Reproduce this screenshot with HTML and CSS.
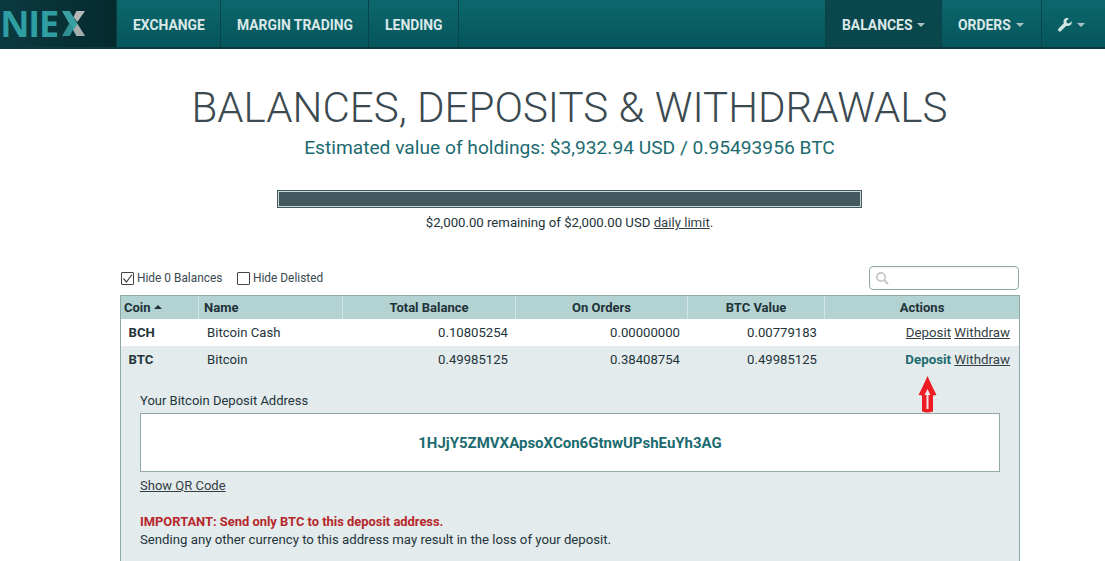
FILE: index.html
```html
<!DOCTYPE html>
<html lang="en">
<head>
<meta charset="utf-8">
<title>Balances</title>
<link rel="stylesheet" href="styles.css">
</head>
<body>
<header class="nav">
  <div class="logo"><span class="logo-text">ONIE</span><svg class="logo-x" width="23" height="25" viewBox="0 0 24 25" preserveAspectRatio="none"><polygon points="0,0 8,0 24,25 15,25" fill="#3aa0a3"/><polygon points="15,0 24,0 16,11 12,6" fill="#b4b8b8"/><polygon points="0,25 8,12 12,18 8,25" fill="#2e8f94"/><polygon points="16,13 24,25 15,25 12,19" fill="#a8acac"/></svg></div>
  <nav class="nav-left">
    <a class="nav-item">EXCHANGE</a>
    <a class="nav-item">MARGIN TRADING</a>
    <a class="nav-item">LENDING</a>
  </nav>
  <nav class="nav-right">
    <a class="nav-item active">BALANCES<i class="caret"></i></a>
    <a class="nav-item orders-item">ORDERS<i class="caret"></i></a>
    <a class="nav-item tool"><svg class="wrench" width="14" height="14" viewBox="0 0 14 14"><path d="M13.6 3.2 11 5.6 8.8 5 8.3 2.9 10.8.4C9-.3 7.1.2 6.2 1.5 5.4 2.6 5.3 4 5.8 5.2L.6 10.4C-.1 11.1-.1 12.2.5 12.9 1.2 13.6 2.4 13.6 3 12.9L8.3 7.7C9.6 8.2 11 8 12.1 7.2 13.4 6.2 14 4.8 13.6 3.2Z" fill="#d5e5e5"/></svg><i class="caret"></i></a>
  </nav>
</header>
<main class="page">
  <h1 class="title">BALANCES, DEPOSITS &amp; WITHDRAWALS</h1>
  <p class="estimate">Estimated value of holdings: $3,932.94 USD / 0.95493956 BTC</p>
  <div class="limit-bar"></div>
  <p class="limit-text">$2,000.00 remaining of $2,000.00 USD <a class="link">daily limit</a>.</p>
  <div class="filters">
    <label class="check"><span class="box"><svg width="13" height="13" viewBox="0 0 13 13"><path d="M2.5 6.5 5.5 10 11 2.5" fill="none" stroke="#444" stroke-width="1.2"/></svg></span>Hide 0 Balances</label>
    <label class="check"><span class="box"></span>Hide Delisted</label>
    <div class="search"><svg width="14" height="14" viewBox="0 0 14 14"><circle cx="6" cy="6" r="4.2" fill="none" stroke="#c4c8c8" stroke-width="1.7"/><path d="M9 9 13 13" stroke="#c4c8c8" stroke-width="2"/></svg></div>
  </div>
  <section class="table">
    <div class="row head">
      <div class="cell coin">Coin<i class="sort"></i></div>
      <div class="cell name">Name</div>
      <div class="cell total ctr">Total Balance</div>
      <div class="cell orders ctr">On Orders</div>
      <div class="cell value ctr">BTC Value</div>
      <div class="cell actions ctr">Actions</div>
    </div>
    <div class="row data">
      <div class="cell coin"><b>BCH</b></div>
      <div class="cell name">Bitcoin Cash</div>
      <div class="cell total num">0.10805254</div>
      <div class="cell orders num">0.00000000</div>
      <div class="cell value num">0.00779183</div>
      <div class="cell actions num"><a class="link">Deposit</a> <a class="link">Withdraw</a></div>
    </div>
    <div class="row data open">
      <div class="cell coin"><b>BTC</b></div>
      <div class="cell name">Bitcoin</div>
      <div class="cell total num">0.49985125</div>
      <div class="cell orders num">0.38408754</div>
      <div class="cell value num">0.49985125</div>
      <div class="cell actions num"><a class="selected">Deposit</a> <a class="link">Withdraw</a></div>
    </div>
    <div class="detail">
      <div class="detail-label">Your Bitcoin Deposit Address</div>
      <div class="address">1HJjY5ZMVXApsoXCon6GtnwUPshEuYh3AG</div>
      <a class="link qr">Show QR Code</a>
      <p class="warn">IMPORTANT: Send only BTC to this deposit address.</p>
      <p class="warn-sub">Sending any other currency to this address may result in the loss of your deposit.</p>
    </div>
    <svg class="arrow" width="19" height="37" viewBox="0 0 19 37"><path d="M9.5 0 14.5 11 18.5 19 15 19.5V35.5Q9.5 37.5 4 35.5V19.5L.5 19 4.5 11Z" fill="#ed1c24"/><path d="M9.5 13 12.5 19H10.5V33H8.5V19H6.5Z" fill="#f6e4e4"/></svg>
  </section>
</main>
</body>
</html>
```
FILE: styles.css
```css
* { box-sizing: border-box; }
html, body { margin: 0; height: 561px; overflow: hidden; background: #fff; }
body { font-family: Roboto, "Liberation Sans", sans-serif; font-size: 13px; color: #23343a; }
a { color: inherit; }

.nav { display: flex; height: 49px; background: linear-gradient(#0c676c, #05565c); border-bottom: 2px solid #0b3a40; }
.logo { width: 117px; height: 47px; background: linear-gradient(90deg, #0a3a40, #052a2e); border-right: 1px solid #0b3d42; overflow: hidden; display: flex; align-items: center; justify-content: flex-end; padding: 0 31px 0 0; flex: none; }
.logo-text { font: 700 36px/1 "Open Sans", "Liberation Sans", sans-serif; color: #2f9ea3; letter-spacing: -1.2px; margin-right: 4px; white-space: nowrap; }
.logo-x { flex: none; }
.nav-left, .nav-right { display: flex; }
.nav-right { margin-left: auto; width: 280px; }
.nav-item { display: flex; align-items: center; height: 47px; padding: 2px 16px 0; font-size: 13.9px; font-weight: 700; color: #d9e8e8; border-right: 1px solid #0a4349; white-space: nowrap; }
.nav-left .nav-item { padding-right: 15px; }
.nav-right .nav-item:first-child { border-left: 1px solid #0a4349; }
.nav-item.active { background: #0a474d; width: 117px; flex: none; }
.nav-item.orders-item { width: 100px; flex: none; padding-left: 16px; }
.nav-item.tool { padding: 2px 15px 0 16px; }
.nav-right .nav-item:last-child { border-right: 0; width: 63px; flex: none; }
.caret { display: inline-block; margin-left: 5px; border-left: 4.5px solid transparent; border-right: 4.5px solid transparent; border-top: 4.5px solid #a9c2c4; }

.page { padding-top: 35px; }
.title { margin: 0; width: 1139px; text-align: center; font-size: 42.1px; line-height: 48px; font-weight: 300; color: #3b4a50; }
.estimate { margin: 3px 0 0; width: 1139px; text-align: center; font-size: 19.2px; line-height: 26px; color: #1c6b70; }
.limit-bar { width: 585px; height: 18px; margin: 29px 0 0 277px; background: #43595f; border: 1px solid #43595f; box-shadow: inset 0 0 0 1px #c3dad9; }
.limit-text { margin: 7px 0 0; width: 1139px; text-align: center; line-height: 16px; font-size: 13.2px; }
.link { text-decoration: underline; color: #333f45; }

.filters { display: flex; align-items: center; height: 24px; margin: 35px 0 0 121px; width: 898px; font-size: 11.9px; color: #3a4a50; }
.check { display: flex; align-items: center; margin-right: 14.5px; }
.box { width: 13px; height: 13px; border: 1px solid #444; border-radius: 1px; margin-right: 3px; display: block; line-height: 0; }
.box svg { margin: -1px; }
.search { margin-left: auto; width: 150px; height: 24px; background: #fff; border: 1px solid #94a8a8; border-radius: 4px; padding: 4px 0 0 5px; box-shadow: inset 0 1px 2px #eef2f2; }

.table { position: relative; width: 900px; margin: 5px 0 0 120px; border: 1px solid #8ea8a8; border-bottom: 0; height: 400px; background: #e4ebed; }
.row { display: flex; }
.head { height: 23px; background: #b3d3d3; font-size: 13px; font-weight: 700; color: #1f3238; line-height: 24px; }
.head .cell + .cell { border-left: 1px solid #d3e6e6; }
.cell { flex: none; padding: 0 8px; }
.coin { width: 77px; padding-left: 3px; }
.name { width: 144px; padding-left: 5px; }
.total { width: 173px; }
.orders { width: 172px; }
.value { width: 137px; }
.actions { width: 195px; }
.sort { display: inline-block; margin-left: 3px; vertical-align: 3px; border-left: 4px solid transparent; border-right: 4px solid transparent; border-bottom: 4px solid #1f3238; }
.head .ctr { text-align: center; }
.data { height: 27px; line-height: 27px; background: #fff; font-size: 13.15px; }
.data.open { background: #e4ebed; }
.data .coin { padding-left: 7.5px; }
.data .name { padding-left: 9px; }
.num { text-align: right; padding-right: 7px; }
.actions.num { padding-right: 9px; font-size: 13.3px; }
.selected { font-weight: 700; color: #1c6b70; }
.detail { padding: 20px 19px 0; }
.detail-label { line-height: 16px; }
.address { margin-top: 4px; height: 59px; width: 860px; background: #fff; border: 1px solid #94a8a8; text-align: center; font-size: 15px; font-weight: 700; line-height: 58px; color: #1c6b70; }
.qr { display: block; margin-top: 6px; line-height: 16px; width: max-content; }
.warn { margin: 19px 0 0; font-weight: 700; color: #b5272a; line-height: 18px; font-size: 12.9px; }
.warn-sub { margin: 0; line-height: 18px; font-size: 13.2px; }
.arrow { position: absolute; left: 797px; top: 80px; }
```
